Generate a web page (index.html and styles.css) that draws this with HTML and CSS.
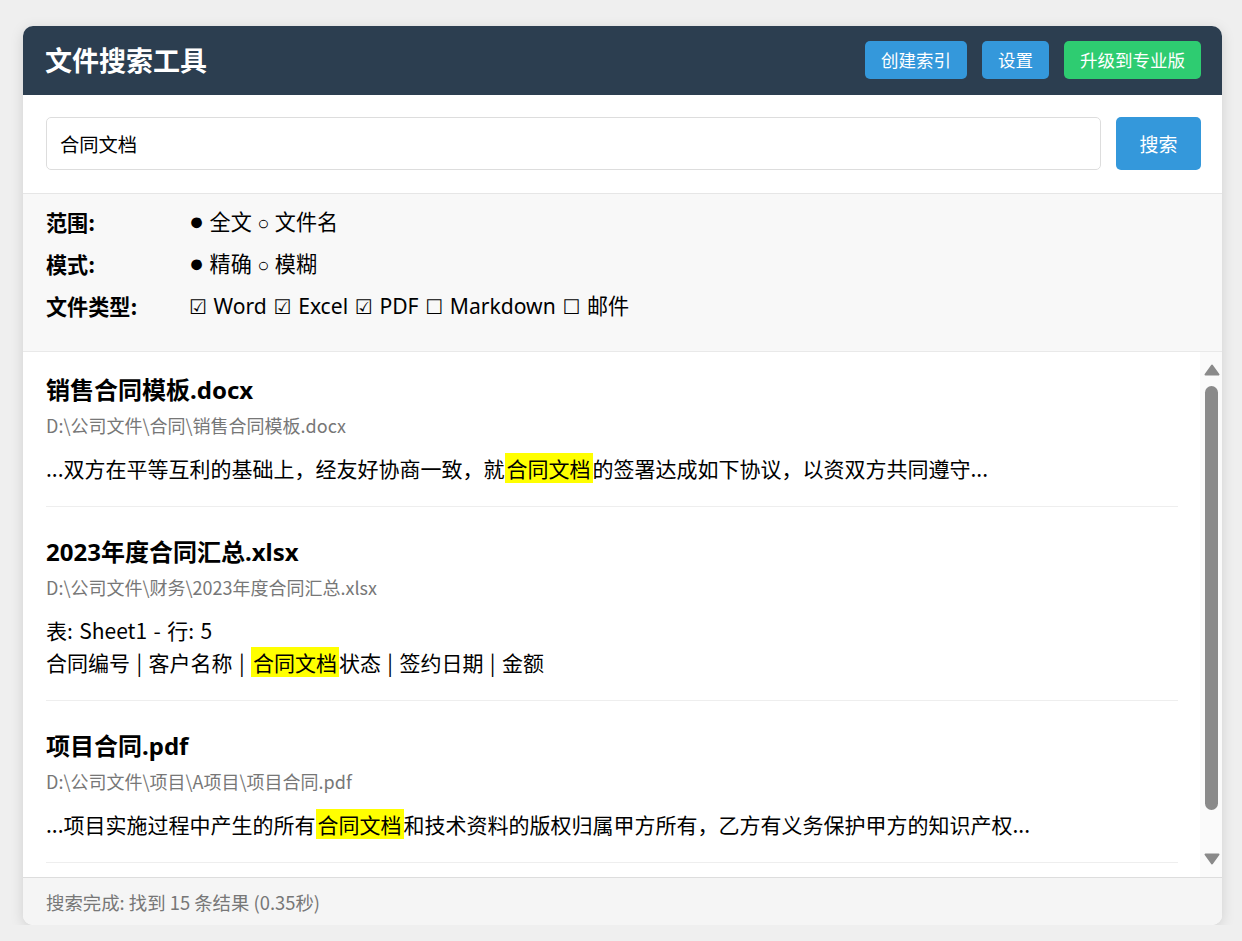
FILE: index.html
```html
<!DOCTYPE html>
<html lang="zh-CN">
<head>
<meta charset="utf-8">
<title>文件搜索工具</title>
<link rel="stylesheet" href="styles.css">
</head>
<body>
<div class="app">
  <header class="topbar">
    <h1 class="brand">文件搜索工具</h1>
    <div class="actions">
      <button class="btn btn-blue">创建索引</button>
      <button class="btn btn-blue">设置</button>
      <button class="btn btn-green">升级到专业版</button>
    </div>
  </header>

  <section class="searchbar">
    <input class="search-input" type="text" value="合同文档">
    <button class="search-btn">搜索</button>
  </section>

  <section class="options">
    <div class="opt-row">
      <span class="opt-label">范围:</span>
      <span class="opt-value"><span class="dot">●</span> 全文 <span class="ring">○</span> 文件名</span>
    </div>
    <div class="opt-row">
      <span class="opt-label">模式:</span>
      <span class="opt-value"><span class="dot">●</span> 精确 <span class="ring">○</span> 模糊</span>
    </div>
    <div class="opt-row">
      <span class="opt-label">文件类型:</span>
      <span class="opt-value opt-types"><span class="box">☑</span> Word <span class="box">☑</span> Excel <span class="box">☑</span> PDF <span class="box">☐</span> Markdown <span class="box">☐</span> 邮件</span>
    </div>
  </section>

  <section class="results">
    <div class="result-list">
      <article class="result">
        <h2 class="result-title">销售合同模板.docx</h2>
        <div class="result-path">D:\公司文件\合同\销售合同模板.docx</div>
        <p class="result-snippet">...双方在平等互利的基础上，经友好协商一致，就<mark class="hl">合同文档</mark>的签署达成如下协议，以资双方共同遵守...</p>
      </article>
      <article class="result">
        <h2 class="result-title">2023年度合同汇总.xlsx</h2>
        <div class="result-path">D:\公司文件\财务\2023年度合同汇总.xlsx</div>
        <p class="result-snippet">表: Sheet1 - 行: 5<br>合同编号 | 客户名称 | <mark class="hl">合同文档</mark>状态 | 签约日期 | 金额</p>
      </article>
      <article class="result">
        <h2 class="result-title">项目合同.pdf</h2>
        <div class="result-path">D:\公司文件\项目\A项目\项目合同.pdf</div>
        <p class="result-snippet">...项目实施过程中产生的所有<mark class="hl">合同文档</mark>和技术资料的版权归属甲方所有，乙方有义务保护甲方的知识产权...</p>
      </article>
    </div>
    <div class="scrollbar" aria-hidden="true">
      <div class="sb-btn sb-up">
        <svg width="16" height="12" viewBox="0 0 16 12"><polygon points="8,1.5 14.5,10.5 1.5,10.5" fill="#8a8a8a" stroke="#8a8a8a" stroke-width="2" stroke-linejoin="round"/></svg>
      </div>
      <div class="sb-track"><div class="sb-thumb"></div></div>
      <div class="sb-btn sb-down">
        <svg width="16" height="12" viewBox="0 0 16 12"><polygon points="1.5,1.5 14.5,1.5 8,10.5" fill="#8a8a8a" stroke="#8a8a8a" stroke-width="2" stroke-linejoin="round"/></svg>
      </div>
    </div>
  </section>

  <footer class="status">搜索完成: 找到 15 条结果 (0.35秒)</footer>
</div>
</body>
</html>
```

FILE: styles.css
```css
* { box-sizing: border-box; }

html, body {
  margin: 0;
  padding: 0;
}

body {
  background: #efefef;
  font-family: "Noto Sans CJK SC", sans-serif;
  color: #000;
}

.app {
  width: 1199px;
  height: 899px;
  margin: 26px 0 0 23px;
  background: #fff;
  border-radius: 10px;
  box-shadow: 0 3px 14px rgba(0, 0, 0, 0.13);
  overflow: hidden;
  display: flex;
  flex-direction: column;
}

/* header */
.topbar {
  height: 69px;
  flex: none;
  background: #2c3e50;
  display: flex;
  align-items: center;
  justify-content: space-between;
  padding: 15px 21px 16px 22px;
}

.brand {
  margin: 0;
  color: #fff;
  font-size: 27px;
  font-weight: 700;
  line-height: 36px;
}

.actions {
  display: flex;
  gap: 15px;
}

.btn {
  height: 38px;
  border: none;
  border-radius: 5px;
  padding: 0 16px;
  color: #fff;
  font-family: "Noto Sans CJK SC", sans-serif;
  font-size: 17.5px;
  line-height: 38px;
  cursor: pointer;
}

.btn-blue { background: #3498db; }
.btn-green { background: #2ecc71; }

/* search */
.searchbar {
  flex: none;
  display: flex;
  gap: 15px;
  padding: 22px 21px 23px 23px;
  border-bottom: 1px solid #e6e6e6;
}

.search-input {
  flex: 1;
  height: 53px;
  border: 1px solid #ddd;
  border-radius: 5px;
  padding: 0 13px;
  font-family: "Noto Sans CJK SC", sans-serif;
  font-size: 19.3px;
  color: #000;
  outline: none;
}

.search-btn {
  width: 85px;
  height: 53px;
  border: none;
  border-radius: 5px;
  background: #3498db;
  color: #fff;
  font-family: "Noto Sans CJK SC", sans-serif;
  font-size: 19px;
  cursor: pointer;
}

/* options */
.options {
  flex: none;
  background: #f8f8f8;
  border-bottom: 1px solid #e9e9e9;
  padding: 12px 23px 29px 23px;
  display: flex;
  flex-direction: column;
  gap: 10px;
}

.opt-row {
  display: flex;
  height: 32px;
  align-items: center;
  font-size: 21.1px;
  line-height: 32px;
}

.opt-label {
  width: 143px;
  flex: none;
  font-weight: 700;
}

.opt-value {
  white-space: pre;
  font-family: "Noto Sans", "Noto Sans CJK SC", sans-serif;
}

.opt-types {
  word-spacing: 1.2px;
}

.dot {
  font-family: "Liberation Sans", "DejaVu Sans", sans-serif;
  font-size: 25px;
  line-height: 20px;
}

.ring {
  font-family: "Liberation Sans", "DejaVu Sans", sans-serif;
  font-size: 20px;
  line-height: 20px;
}

.box {
  font-family: "DejaVu Sans", sans-serif;
  font-size: 20px;
  line-height: 20px;
}

/* results */
.results {
  height: 525px;
  flex: none;
  display: flex;
  background: #fff;
}

.result-list {
  flex: 1;
  min-width: 0;
  overflow: hidden;
  padding: 0 22px 0 23px;
}

.result {
  padding: 22px 0;
  margin-bottom: 7px;
  border-bottom: 1px solid #eee;
}

.result-title {
  margin: 0 0 6px 0;
  font-family: "Noto Sans", "Noto Sans CJK SC", sans-serif;
  font-size: 24px;
  font-weight: 700;
  line-height: 32px;
}

.result-path {
  font-size: 18px;
  line-height: 26px;
  color: #777;
  margin-bottom: 14px;
}

.result-snippet {
  margin: 0;
  font-size: 21px;
  line-height: 32px;
  word-spacing: 1.7px;
}

.hl {
  background: #ffff00;
  color: inherit;
  padding: 0 2px;
}

/* scrollbar */
.scrollbar {
  width: 22px;
  flex: none;
  background: #fafafa;
  display: flex;
  flex-direction: column;
  align-items: center;
}

.sb-btn {
  height: 32px;
  width: 100%;
  display: flex;
  justify-content: center;
  flex: none;
}

.sb-up { padding-top: 12px; padding-left: 1px; }
.sb-down { padding-top: 8px; padding-left: 1px; }

.sb-btn svg { display: block; }

.sb-track {
  flex: 1;
  width: 100%;
  padding: 2px 4px 0 5px;
}

.sb-thumb {
  height: 424px;
  background: #8a8a8a;
  border-radius: 7px;
}

/* footer */
.status {
  flex: 1;
  background: #f5f5f5;
  border-top: 1px solid #ddd;
  padding: 0 23px;
  display: flex;
  align-items: center;
  font-size: 18.4px;
  color: #777;
}
```
